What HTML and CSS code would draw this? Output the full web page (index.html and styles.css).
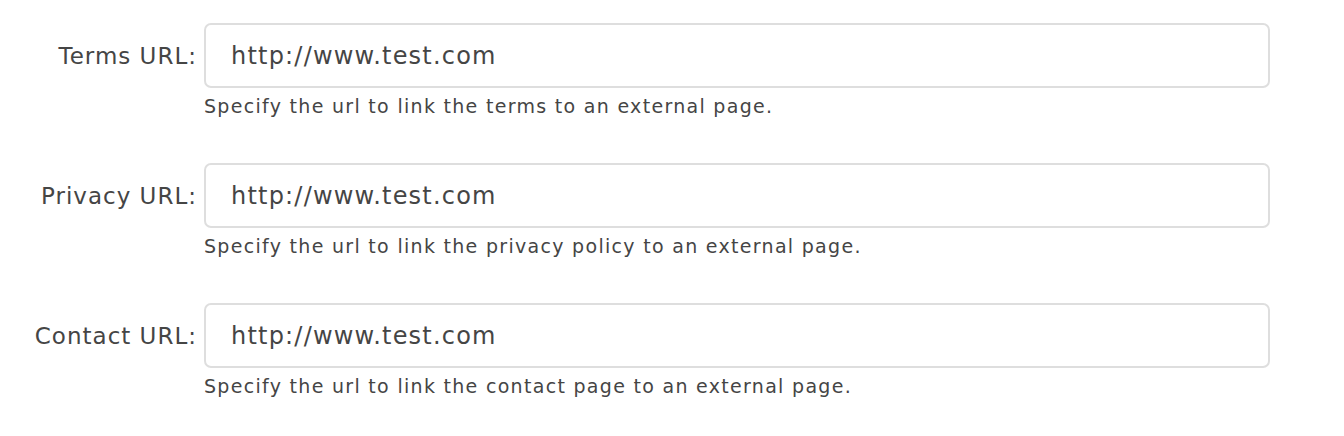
FILE: index.html
```html
<!DOCTYPE html>
<html>
<head>
<meta charset="utf-8">
<link rel="stylesheet" href="styles.css">
</head>
<body>
<form class="form">
  <div class="row">
    <label class="label" for="terms">Terms URL:</label>
    <div class="control">
      <input class="input" id="terms" type="text" value="http://www.test.com">
      <div class="help">Specify the url to link the terms to an external page.</div>
    </div>
  </div>
  <div class="row">
    <label class="label" for="privacy">Privacy URL:</label>
    <div class="control">
      <input class="input" id="privacy" type="text" value="http://www.test.com">
      <div class="help">Specify the url to link the privacy policy to an external page.</div>
    </div>
  </div>
  <div class="row">
    <label class="label" for="contact">Contact URL:</label>
    <div class="control">
      <input class="input" id="contact" type="text" value="http://www.test.com">
      <div class="help">Specify the url to link the contact page to an external page.</div>
    </div>
  </div>
</form>
</body>
</html>
```
FILE: styles.css
```css
html, body {
  margin: 0;
  padding: 0;
  background: #ffffff;
}
body {
  font-family: "DejaVu Sans", "Open Sans", sans-serif;
  color: #444;
}
.form {
  display: flex;
  flex-direction: column;
  gap: 40px;
  padding: 23px 74px 0 0;
}
.row {
  display: grid;
  grid-template-columns: 197px 1fr;
  column-gap: 7px;
  align-items: start;
  height: 100px;
}
.label {
  height: 65px;
  display: flex;
  align-items: center;
  justify-content: flex-end;
  font-size: 23px;
  letter-spacing: 1px;
  color: #454545;
}
.control {
  display: flex;
  flex-direction: column;
}
.input {
  box-sizing: border-box;
  height: 65px;
  width: 100%;
  border: 2px solid #dedede;
  border-radius: 7px;
  padding: 0 0 0 25px;
  font-family: inherit;
  font-size: 24px;
  letter-spacing: 1.2px;
  color: #454545;
  background: #fff;
  outline: none;
}
.help {
  margin-top: 7px;
  font-size: 19px;
  letter-spacing: 1.3px;
  color: #454545;
}
```
